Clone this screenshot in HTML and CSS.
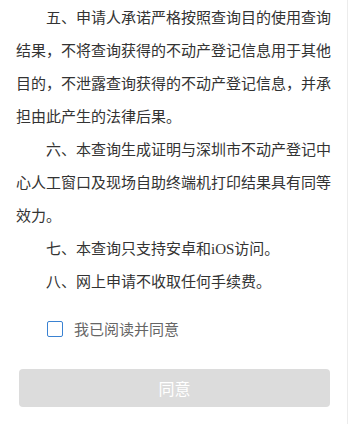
FILE: index.html
```html
<!DOCTYPE html>
<html lang="zh-CN">
<head>
<meta charset="utf-8">
<title>不动产登记查询须知</title>
<link rel="stylesheet" href="styles.css">
</head>
<body>
<div class="page">
  <div class="notice">
    <p>五、申请人承诺严格按照查询目的使用查询结果，不将查询获得的不动产登记信息用于其他目的，不泄露查询获得的不动产登记信息，并承担由此产生的法律后果。</p>
    <p>六、本查询生成证明与深圳市不动产登记中心人工窗口及现场自助终端机打印结果具有同等效力。</p>
    <p>七、本查询只支持安卓和iOS访问。</p>
    <p>八、网上申请不收取任何手续费。</p>
  </div>
  <label class="agree">
    <span class="checkbox"></span>
    <span class="agree-text">我已阅读并同意</span>
  </label>
  <div class="actions">
    <button class="btn-agree" type="button" disabled>同意</button>
  </div>
</div>
</body>
</html>
```
FILE: styles.css
```css
html, body {
  margin: 0;
  padding: 0;
  background: #ffffff;
}

.page {
  width: 347px;
  min-height: 424px;
  border-right: 1px solid #ececec;
  box-sizing: content-box;
  background: #ffffff;
}

.notice {
  padding: 2px 16px 0;
  color: #333333;
  font-family: "Liberation Serif", "Noto Sans CJK SC", serif;
  font-size: 15px;
  line-height: 33px;
}

.notice p {
  margin: 0;
  text-indent: 2em;
}

.agree {
  display: flex;
  align-items: center;
  height: 24px;
  margin-top: 18px;
  padding-left: 47px;
}

.checkbox {
  width: 14px;
  height: 14px;
  border: 1.5px solid #3a82d2;
  border-radius: 2px;
  background: #ffffff;
  flex: none;
}

.agree-text {
  margin-left: 11px;
  color: #666666;
  font-family: "Noto Sans CJK SC", sans-serif;
  font-size: 15px;
  line-height: 24px;
}

.actions {
  padding: 0 17px 0 19px;
  margin-top: 28px;
}

.btn-agree {
  display: block;
  width: 100%;
  height: 38px;
  border: none;
  border-radius: 4px;
  background: #dcdcdc;
  color: #ffffff;
  font-family: "Noto Sans CJK SC", sans-serif;
  font-size: 16px;
  padding: 0;
}
```
